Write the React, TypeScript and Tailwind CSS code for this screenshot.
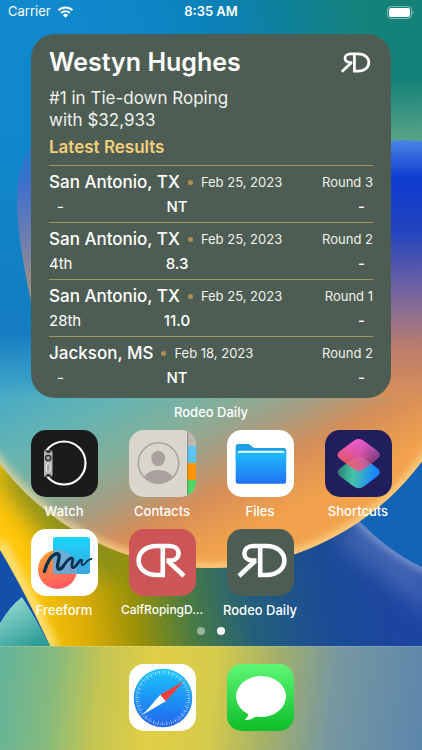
import type { ReactNode } from 'react';

interface Result {
  location: string;
  date: string;
  round: string;
  place: string;
  score: string;
  payout: string;
}

interface AppItem {
  name: string;
  icon: ReactNode;
  small?: boolean;
}

const results: Result[] = [
  { location: 'San Antonio, TX', date: 'Feb 25, 2023', round: 'Round 3', place: '-', score: 'NT', payout: '-' },
  { location: 'San Antonio, TX', date: 'Feb 25, 2023', round: 'Round 2', place: '4th', score: '8.3', payout: '-' },
  { location: 'San Antonio, TX', date: 'Feb 25, 2023', round: 'Round 1', place: '28th', score: '11.0', payout: '-' },
  { location: 'Jackson, MS', date: 'Feb 18, 2023', round: 'Round 2', place: '-', score: 'NT', payout: '-' },
];

const apps: AppItem[] = [
  { name: 'Watch', icon: <WatchIcon /> },
  { name: 'Contacts', icon: <ContactsIcon /> },
  { name: 'Files', icon: <FilesIcon /> },
  { name: 'Shortcuts', icon: <ShortcutsIcon /> },
  { name: 'Freeform', icon: <FreeformIcon /> },
  { name: 'CalfRopingD...', icon: <CalfRopingIcon />, small: true },
  { name: 'Rodeo Daily', icon: <RodeoIcon /> },
];

export default function App() {
  return (
    <div className="relative isolate flex min-h-screen w-full flex-col overflow-hidden bg-[#0f86ca] font-['Inter',sans-serif] text-white">
      <Wallpaper />
      <StatusBar />
      <main className="flex grow flex-col pt-[10px]">
        <div className="px-[31px]">
          <RodeoWidget />
        </div>
        <p className="mt-1 text-center text-[13px] leading-5 font-medium">Rodeo Daily</p>
        <div className="mt-2 grid grid-cols-4 gap-y-2 px-[15px]">
          {apps.map((app) => (
            <button key={app.name} type="button" className="flex flex-col items-center">
              <AppTile>{app.icon}</AppTile>
              <span className={`mt-1 leading-5 font-medium whitespace-nowrap ${app.small ? 'text-xs' : 'text-[13px]'}`}>
                {app.name}
              </span>
            </button>
          ))}
        </div>
        <div className="mt-[7px] mb-[10px] flex justify-center gap-3">
          <span className="size-2 rounded-full bg-white/45" />
          <span className="size-2 rounded-full bg-white" />
        </div>
      </main>
      <Dock />
    </div>
  );
}

function StatusBar() {
  return (
    <header className="grid h-6 grid-cols-3 items-center px-2">
      <div className="flex items-center gap-[6px] text-[13px]">
        <span>Carrier</span>
        <svg className="h-3 w-[17px]" viewBox="0 0 17 12" fill="white" aria-hidden="true">
          <path d="M8.5 2.6c2.4 0 4.6.9 6.2 2.5l1.5-1.5A11 11 0 0 0 8.5.4 11 11 0 0 0 .8 3.6l1.5 1.5a9 9 0 0 1 6.2-2.5z" />
          <path d="M8.5 6.3c1.4 0 2.6.5 3.5 1.4l1.5-1.5a7.2 7.2 0 0 0-10 0L5 7.7c.9-.9 2.1-1.4 3.5-1.4z" />
          <path d="M8.5 11.7l2.6-2.7a3.7 3.7 0 0 0-5.2 0z" />
        </svg>
      </div>
      <span className="text-center text-[13px] font-semibold">8:35 AM</span>
      <svg className="h-[13px] w-[27px] justify-self-end" viewBox="0 0 27 13" aria-hidden="true">
        <rect x="0.5" y="0.5" width="24" height="12" rx="3.5" fill="none" stroke="white" strokeOpacity="0.45" />
        <rect x="2" y="2" width="21" height="9" rx="2" fill="white" />
        <path d="M25.6 4.5c1.2.5 1.2 3.5 0 4z" fill="white" fillOpacity="0.5" />
      </svg>
    </header>
  );
}

function RodeoWidget() {
  return (
    <section className="rounded-[24px] bg-[#4e5d53] px-[18px] pt-[13px] pb-[5px]">
      <div className="flex items-center justify-between">
        <h1 className="text-[25px] leading-[30px] font-semibold">Westyn Hughes</h1>
        <svg className="mr-[2px] h-[23px] w-[31px]" viewBox="9 13 52 37" aria-hidden="true">
          <RdMark />
        </svg>
      </div>
      <p className="mt-[10px] text-[17px] leading-[22px] text-[#eff1ee]">
        #1 in Tie-down Roping
        <br />
        with $32,933
      </p>
      <h2 className="mt-[5px] mb-[7px] text-[17px] leading-[22px] font-semibold text-[#f3cf7c]">Latest Results</h2>
      <ul>
        {results.map((result, index) => (
          <ResultRow key={index} result={result} />
        ))}
      </ul>
    </section>
  );
}

function ResultRow({ result }: { result: Result }) {
  return (
    <li className="border-t border-[#a8925f] pt-1 pb-[2px]">
      <div className="flex items-center leading-6">
        <span className="text-[17px] font-medium">{result.location}</span>
        <span className="mx-2 size-[5px] rounded-full bg-[#b08e54]" />
        <span className="text-[13px] text-[#eff1ee]">{result.date}</span>
        <span className="ml-auto text-[13px] text-[#eff1ee]">{result.round}</span>
      </div>
      <div className="grid grid-cols-[80px_96px_1fr] text-[15px] leading-[26px]">
        <span className={result.place === '-' ? 'px-2' : ''}>{result.place}</span>
        <span className="text-center font-medium">{result.score}</span>
        <span className="px-2 text-right font-medium">{result.payout}</span>
      </div>
    </li>
  );
}

function Dock() {
  return (
    <nav className="flex h-[104px] justify-center gap-[31px] border-t border-white/15 bg-[linear-gradient(97deg,#62b39c_0%,#86ba7e_13%,#c4c553_24%,#e0ce46_36%,#d6cb4b_50%,#a3b06a_64%,#7798a0_78%,#5c86ac_100%)] pt-[17px]">
      <button type="button" aria-label="Safari" className="self-start">
        <AppTile>
          <SafariIcon />
        </AppTile>
      </button>
      <button type="button" aria-label="Messages" className="self-start">
        <AppTile>
          <MessagesIcon />
        </AppTile>
      </button>
    </nav>
  );
}

function AppTile({ children }: { children: ReactNode }) {
  return (
    <svg className="size-[67px] rounded-[15px]" viewBox="0 0 67 67" aria-hidden="true">
      {children}
    </svg>
  );
}

function WatchIcon() {
  return (
    <>
      <rect width="67" height="67" fill="#1b1b1d" />
      <circle cx="33" cy="33" r="21.5" fill="none" stroke="white" strokeWidth="2.2" />
      <rect x="9" y="21" width="7" height="25" fill="#1b1b1d" />
      <rect x="13" y="20" width="8.5" height="27" rx="2" fill="#b4b4b6" />
      <path d="M14.5 20.5c1 3 5 3 6 0M14.5 46.5c1-3 5-3 6 0" fill="#1b1b1d" stroke="#4a4a4c" strokeWidth="0.6" />
      <circle cx="17.2" cy="28" r="2.7" fill="#9b9b9d" stroke="#2f2f31" strokeWidth="1.3" />
      <rect x="15.4" y="33.5" width="3.8" height="8.5" rx="1.7" fill="#a5a5a7" stroke="#f0f0f2" strokeWidth="1" />
    </>
  );
}

function ContactsIcon() {
  return (
    <>
      <defs>
        <clipPath id="contact-ring">
          <circle cx="29.5" cy="33" r="20.5" />
        </clipPath>
      </defs>
      <rect width="67" height="67" fill="#dad6ce" />
      <rect x="58" width="9" height="16" fill="#bdb8b1" />
      <rect x="58" y="16" width="9" height="17" fill="#5ac4fb" />
      <rect x="58" y="33" width="9" height="17" fill="#ff9500" />
      <rect x="58" y="50" width="9" height="17" fill="#4fd665" />
      <rect x="58" width="1.5" height="67" fill="#6b5f50" fillOpacity="0.35" />
      <circle cx="29.5" cy="33" r="20.2" fill="none" stroke="#a9a19d" strokeWidth="1.6" />
      <ellipse cx="29.2" cy="28.5" rx="7" ry="7.8" fill="#a9a19d" />
      <ellipse cx="29.5" cy="51" rx="15.5" ry="11" fill="#a9a19d" clipPath="url(#contact-ring)" />
    </>
  );
}

function FilesIcon() {
  return (
    <>
      <defs>
        <linearGradient id="folder-front" x1="0" y1="0" x2="0" y2="1">
          <stop offset="0" stopColor="#21bbfb" />
          <stop offset="1" stopColor="#1f72f2" />
        </linearGradient>
      </defs>
      <rect width="67" height="67" fill="white" />
      <path d="M8.7 16.5a2.5 2.5 0 0 1 2.5-2.5h10c2.5 0 4 4 6.5 4h29a2.5 2.5 0 0 1 2.5 2.5V30H8.7z" fill="#1a9fe6" />
      <rect x="10.5" y="20.8" width="47" height="5" rx="1.5" fill="#e9f7ff" />
      <path d="M8.7 22.8h50.5v28.5a2.5 2.5 0 0 1-2.5 2.5H11.2a2.5 2.5 0 0 1-2.5-2.5z" fill="url(#folder-front)" />
    </>
  );
}

function ShortcutsIcon() {
  const diamond =
    'M28.5-1.5Q33.7-5.5 39-1.5L52.5 8.5Q57.5 12.5 52.5 16.5L39 26.5Q33.7 30.5 28.5 26.5L15 16.5Q10 12.5 15 8.5Z';
  return (
    <>
      <defs>
        <linearGradient id="diamond-top" x1="0.1" y1="0.6" x2="0.95" y2="0.4">
          <stop offset="0" stopColor="#ff5d62" />
          <stop offset="0.5" stopColor="#e85590" />
          <stop offset="1" stopColor="#7c3f79" stopOpacity="0.8" />
        </linearGradient>
        <linearGradient id="diamond-shine" x1="0.5" y1="0" x2="0.5" y2="0.7">
          <stop offset="0" stopColor="#f25ddc" stopOpacity="0.9" />
          <stop offset="1" stopColor="#f25ddc" stopOpacity="0" />
        </linearGradient>
        <linearGradient id="diamond-bottom" x1="0.05" y1="0.4" x2="0.9" y2="0.5">
          <stop offset="0" stopColor="#2c8579" />
          <stop offset="0.4" stopColor="#48c5a9" />
          <stop offset="1" stopColor="#1784ff" />
        </linearGradient>
      </defs>
      <rect width="67" height="67" fill="#201e5b" />
      <path d={diamond} transform="translate(0 29.7)" fill="url(#diamond-bottom)" />
      <path d={diamond} transform="translate(0 12.5)" fill="url(#diamond-top)" fillOpacity="0.88" />
      <path d={diamond} transform="translate(0 12.5)" fill="url(#diamond-shine)" />
    </>
  );
}

function FreeformIcon() {
  return (
    <>
      <defs>
        <linearGradient id="freeform-circle" x1="0.3" y1="0" x2="0.6" y2="1">
          <stop offset="0" stopColor="#ffa02e" />
          <stop offset="1" stopColor="#ff5867" />
        </linearGradient>
        <linearGradient id="freeform-note" x1="0" y1="0" x2="0" y2="1">
          <stop offset="0" stopColor="#19d6fb" />
          <stop offset="1" stopColor="#3ba5df" />
        </linearGradient>
        <clipPath id="freeform-clip">
          <rect x="22" y="8" width="37" height="37" rx="2.5" />
        </clipPath>
      </defs>
      <rect width="67" height="67" fill="white" />
      <circle cx="26.5" cy="40.5" r="19.5" fill="url(#freeform-circle)" />
      <rect x="22" y="8" width="37" height="37" rx="2.5" fill="url(#freeform-note)" />
      <circle cx="26.5" cy="40.5" r="19.5" fill="#8ba2c9" fillOpacity="0.7" clipPath="url(#freeform-clip)" />
      <g fill="none" stroke="#06324f" strokeLinecap="round" strokeLinejoin="round">
        <path d="M13.5 42.5C15.5 35 20 25 26 24.7C30.5 25 26.5 33 26.5 37.5C27 41.5 30 40.5 32 37.5" strokeWidth="3.4" />
        <path d="M32 37.5C35 33 37.5 29 40.5 28.8C44 29.3 39 36.5 41.5 38.5C44.5 39.5 46.5 34 49 31.5" strokeWidth="2.8" />
        <path d="M49 31.5C51.5 29.5 51.5 31.5 50.5 34C50.3 37 52.5 36.5 54.5 34C56.5 31.5 58 30 60.5 29.8" strokeWidth="1.8" />
      </g>
    </>
  );
}

// Joined letters sharing one stem; mirrored for the sister app
function RdMark() {
  return (
    <path
      d="M33.2 17V46M28.5 31.5L12 47M29.5 31.5H25.5C14.5 31 14.5 17 26.5 17H39C63.5 17 63.5 46 39 46H31"
      fill="none"
      stroke="white"
      strokeWidth="4.6"
    />
  );
}

function CalfRopingIcon() {
  return (
    <>
      <rect width="67" height="67" fill="#cc5657" />
      <g transform="translate(67 0) scale(-1 1)">
        <RdMark />
      </g>
    </>
  );
}

function RodeoIcon() {
  return (
    <>
      <rect width="67" height="67" fill="#4e5d53" />
      <RdMark />
    </>
  );
}

function SafariIcon() {
  return (
    <>
      <defs>
        <linearGradient id="safari-dial" x1="0" y1="0" x2="0" y2="1">
          <stop offset="0" stopColor="#1bc6fb" />
          <stop offset="1" stopColor="#2063ee" />
        </linearGradient>
      </defs>
      <rect width="67" height="67" fill="white" />
      <circle cx="34" cy="34" r="29.3" fill="url(#safari-dial)" />
      {/* Fine ticks all round, longer ones at every second step */}
      <circle cx="34" cy="34" r="26.2" fill="none" stroke="white" strokeOpacity="0.6" strokeWidth="2.5" strokeDasharray="0.6 1.686" />
      <circle cx="34" cy="34" r="25.2" fill="none" stroke="white" strokeOpacity="0.6" strokeWidth="4.5" strokeDasharray="0.6 3.798" />
      <path d="M54.5 17.5L31.3 30.8L36.7 37.2Z" fill="#fb3f37" />
      <path d="M14 50.5L31.3 30.8L36.7 37.2Z" fill="white" />
    </>
  );
}

function MessagesIcon() {
  return (
    <>
      <defs>
        <linearGradient id="messages-bg" x1="0" y1="0" x2="0" y2="1">
          <stop offset="0" stopColor="#5ff777" />
          <stop offset="1" stopColor="#0bbd28" />
        </linearGradient>
      </defs>
      <rect width="67" height="67" fill="url(#messages-bg)" />
      <ellipse cx="34" cy="32.5" rx="25" ry="20.5" fill="white" />
      <path d="M21 47C22 51 20.5 54 17.5 56C22.5 56.5 27 54.5 30 51Z" fill="white" />
    </>
  );
}

function Wallpaper() {
  return (
    <svg className="absolute inset-0 -z-10 size-full" viewBox="0 0 422 750" preserveAspectRatio="none" aria-hidden="true">
      <defs>
        <linearGradient id="sky" gradientUnits="userSpaceOnUse" x1="90" y1="60" x2="360" y2="0">
          <stop offset="0" stopColor="#0f89cc" />
          <stop offset="0.25" stopColor="#0d86c6" />
          <stop offset="0.5" stopColor="#0b80b6" />
          <stop offset="0.75" stopColor="#0f8197" />
          <stop offset="1" stopColor="#15827a" />
        </linearGradient>
        <linearGradient id="sky-glow" x1="0" y1="0" x2="0" y2="1">
          <stop offset="0" stopColor="#5aa587" stopOpacity="0" />
          <stop offset="1" stopColor="#5aa587" />
        </linearGradient>
        <linearGradient id="orb" gradientUnits="userSpaceOnUse" x1="60" y1="360" x2="200" y2="640">
          <stop offset="0" stopColor="#46abc8" />
          <stop offset="0.18" stopColor="#62b3b4" />
          <stop offset="0.34" stopColor="#80b09c" />
          <stop offset="0.48" stopColor="#a79d82" />
          <stop offset="0.6" stopColor="#d68e58" />
          <stop offset="0.76" stopColor="#f2a24c" />
        </linearGradient>
        <linearGradient id="orb-fade" gradientUnits="userSpaceOnUse" x1="0" y1="130" x2="0" y2="398">
          <stop offset="0" stopColor="#0f89cc" />
          <stop offset="0.75" stopColor="#147cc0" />
          <stop offset="1" stopColor="#147cc0" stopOpacity="0" />
        </linearGradient>
        <linearGradient id="right-orb" gradientUnits="userSpaceOnUse" x1="400" y1="140" x2="400" y2="396">
          <stop offset="0" stopColor="#4b86e6" />
          <stop offset="0.15" stopColor="#0f3cd0" />
          <stop offset="0.35" stopColor="#2143c0" />
          <stop offset="0.62" stopColor="#7d689b" />
          <stop offset="0.82" stopColor="#bd7e6c" />
          <stop offset="1" stopColor="#d88f58" />
        </linearGradient>
        <linearGradient id="left-crescent" x1="0" y1="0" x2="0" y2="1">
          <stop offset="0" stopColor="#1f7acc" />
          <stop offset="0.25" stopColor="#3d70cc" />
          <stop offset="0.6" stopColor="#7480ab" />
          <stop offset="1" stopColor="#c09a6d" />
        </linearGradient>
        <linearGradient id="petals" gradientUnits="userSpaceOnUse" x1="30" y1="600" x2="400" y2="540">
          <stop offset="0" stopColor="#ffc60a" />
          <stop offset="0.14" stopColor="#d9ac06" />
          <stop offset="0.27" stopColor="#989108" />
          <stop offset="0.42" stopColor="#487a45" />
          <stop offset="0.58" stopColor="#235f7c" />
          <stop offset="0.78" stopColor="#1b4b96" />
          <stop offset="1" stopColor="#1c44a2" />
        </linearGradient>
        <linearGradient id="teal-petal" x1="0" y1="0" x2="0.5" y2="1">
          <stop offset="0" stopColor="#9fe0d8" />
          <stop offset="1" stopColor="#2e9d96" />
        </linearGradient>
        <filter id="soft" x="-20%" y="-20%" width="140%" height="140%">
          <feGaussianBlur stdDeviation="4" />
        </filter>
        <filter id="softer" x="-50%" y="-50%" width="200%" height="200%">
          <feGaussianBlur stdDeviation="12" />
        </filter>
        <clipPath id="orb-clip">
          <circle cx="210" cy="304" r="264" />
        </clipPath>
      </defs>
      <rect width="422" height="750" fill="url(#sky)" />

      {/* Lower petals */}
      <rect y="440" width="422" height="310" fill="url(#petals)" />
      <ellipse cx="62" cy="520" rx="85" ry="22" fill="#7a8c1c" fillOpacity="0.85" transform="rotate(42 62 520)" filter="url(#softer)" />
      <path d="M0 542Q24 585 54 650" fill="none" stroke="#ffe58a" strokeWidth="9" filter="url(#soft)" />
      <path d="M0 550Q24 590 52 650H0Z" fill="#1350ab" />
      <path d="M0 623Q10 606 22 597Q36 618 52 650H0Z" fill="url(#teal-petal)" />
      <path d="M352 513Q385 550 422 568L440 620L340 540Z" fill="#6a86c6" fillOpacity="0.6" filter="url(#softer)" />
      <path d="M352 513Q385 550 430 571" fill="none" stroke="#93a9da" strokeWidth="7" filter="url(#soft)" />
      <path d="M340 440H422V567Q385 550 352 513Z" fill="#1363b6" />

      {/* Main orb with its bright rim */}
      <circle cx="210" cy="304" r="264" fill="url(#orb)" />
      <g clipPath="url(#orb-clip)">
        <circle cx="210" cy="304" r="264" fill="none" stroke="#ffdf98" strokeWidth="7" filter="url(#soft)" />
      </g>
      <rect width="370" height="398" fill="url(#orb-fade)" />
      <rect width="422" height="142" fill="url(#sky)" />
      <rect x="340" y="80" width="82" height="62" fill="url(#sky-glow)" />
      <path d="M370 143Q396 139 422 141V396H370Z" fill="url(#right-orb)" />
      <path d="M35 140Q17 162 17 202T35 318Z" fill="url(#left-crescent)" />
    </svg>
  );
}
